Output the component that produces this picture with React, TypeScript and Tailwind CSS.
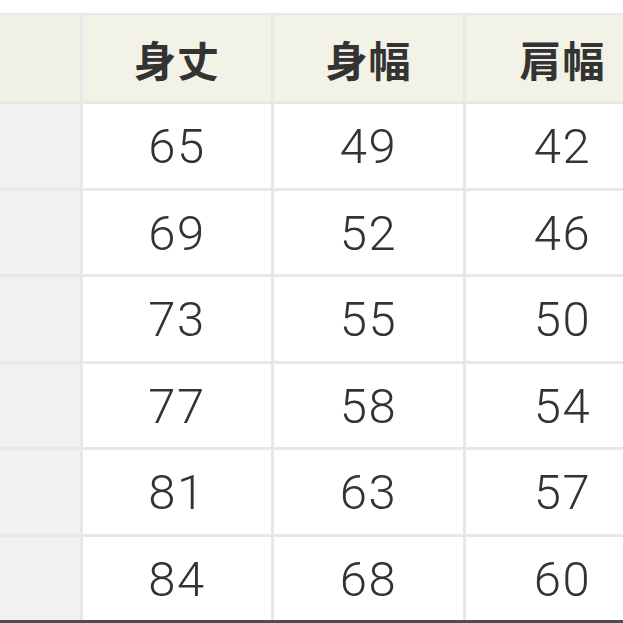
// Size chart table (身丈 / 身幅 / 肩幅)
const headers = ["身丈", "身幅", "肩幅"];

const rows = [
  [65, 49, 42],
  [69, 52, 46],
  [73, 55, 50],
  [77, 58, 54],
  [81, 63, 57],
  [84, 68, 60],
];

export default function App() {
  return (
    <div className="w-[623px] h-[623px] overflow-hidden bg-white">
      <div className="h-[13px] bg-white" />
      <div className="w-[660px] bg-[#e8e8e8] pt-[2px] border-b-[3px] border-[#4d4d4d]">
        <div className="grid grid-cols-[80px_188px_189px_193px] grid-rows-[86px_repeat(6,83.5px)] gap-[3px]">
          <div className="bg-[#f2f1e6]" />
          {headers.map((h) => (
            <div
              key={h}
              className="bg-[#f3f2e7] flex items-center justify-center text-[42px] font-bold text-[#333] tracking-[1px] font-['Noto_Sans_CJK_JP',sans-serif]"
            >
              {h}
            </div>
          ))}
          {rows.map((r, i) => (
            <>
              <div key={`l${i}`} className="bg-[#f1f1f1]" />
              {r.map((v, j) => (
                <div
                  key={`${i}-${j}`}
                  className="bg-white flex items-center justify-center pt-[2px] text-[49px] font-light tracking-[1.5px] text-[#333] font-['Roboto',Arial,sans-serif]"
                >
                  {v}
                </div>
              ))}
            </>
          ))}
        </div>
      </div>
    </div>
  );
}
